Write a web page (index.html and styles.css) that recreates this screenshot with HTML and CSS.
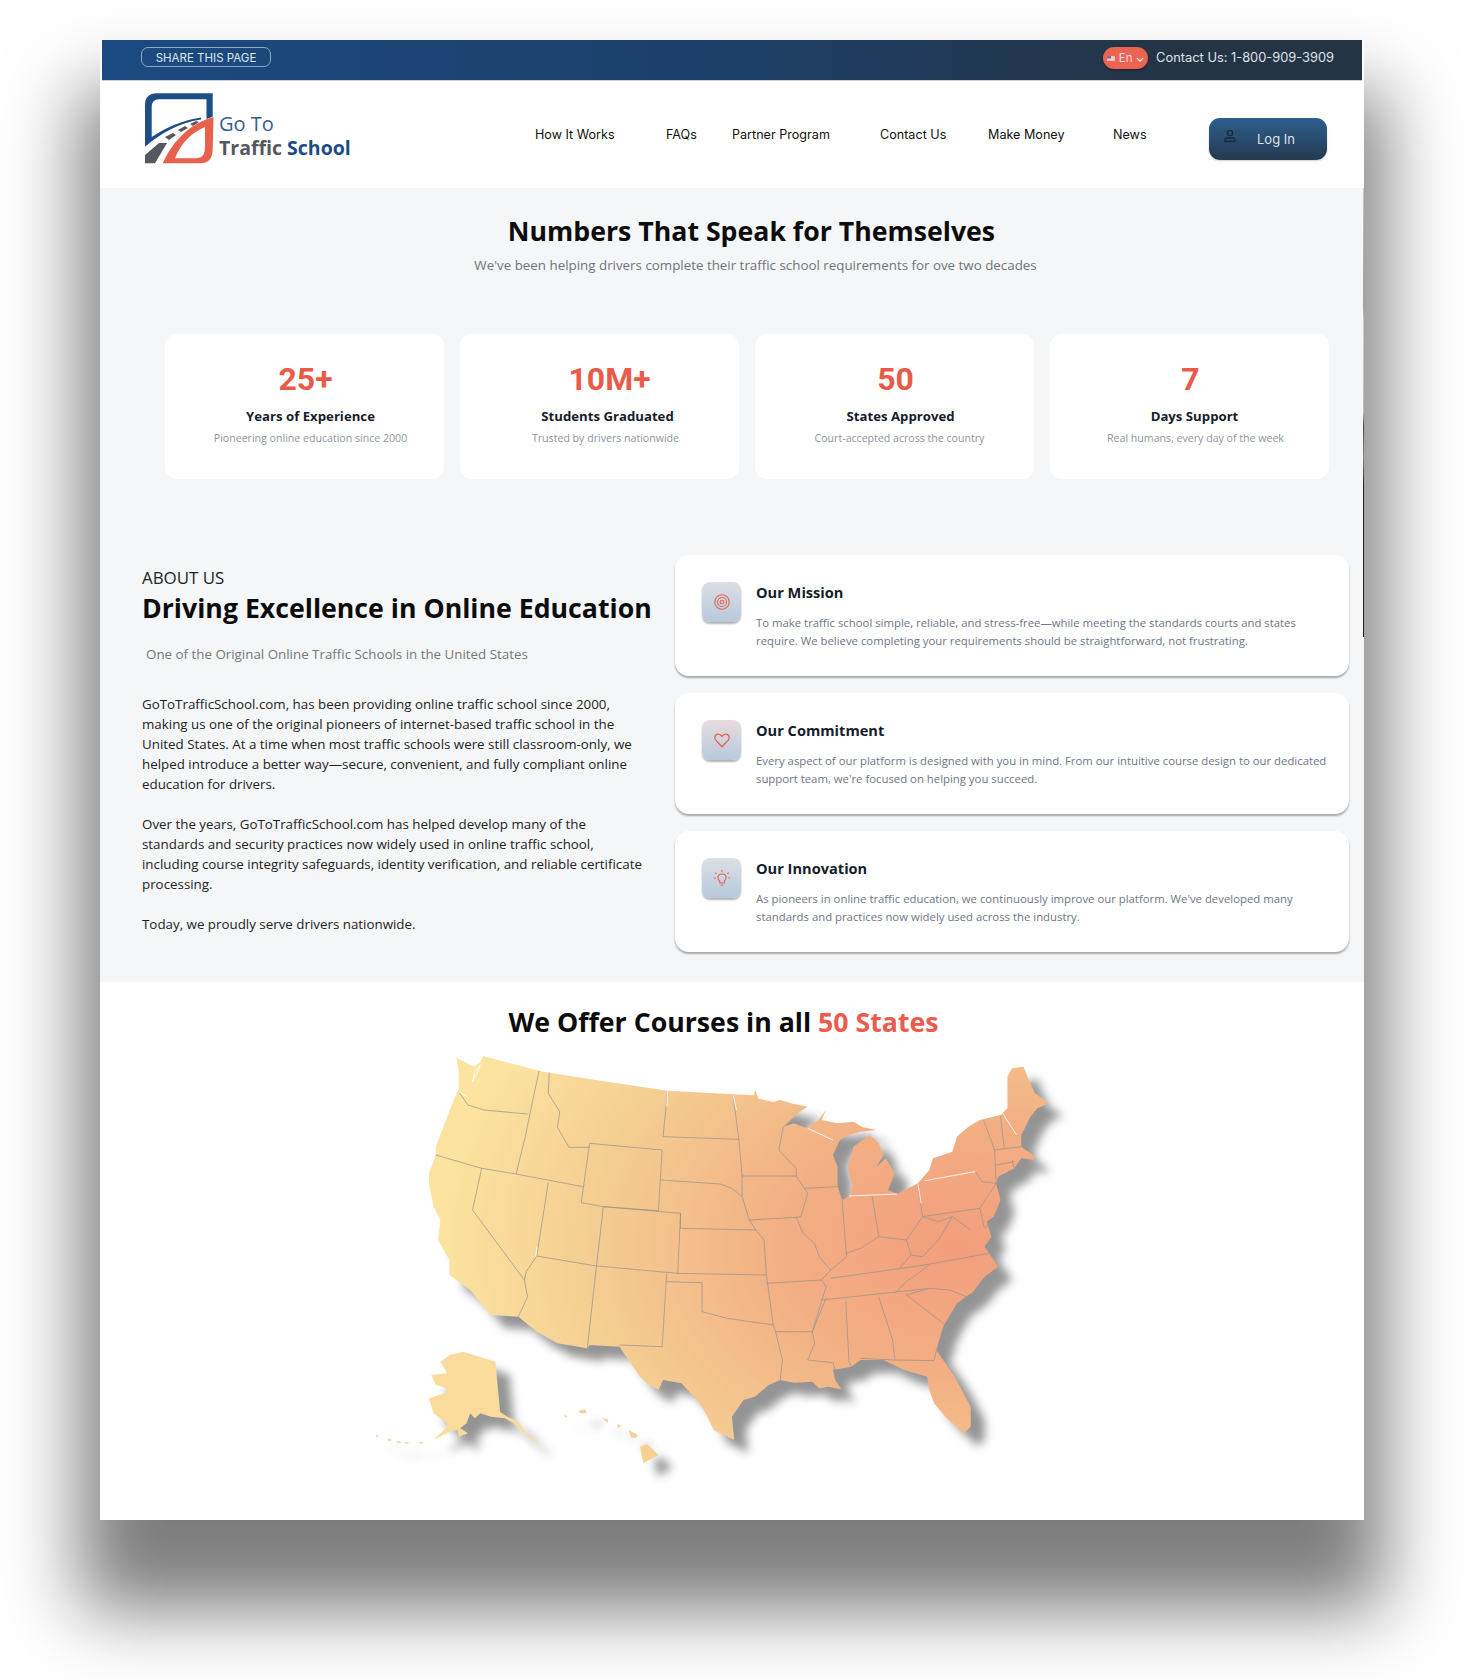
FILE: index.html
```html
<!DOCTYPE html>
<html lang="en">
<head>
  <meta charset="UTF-8">
  <title>Go To Traffic School</title>
  <link rel="stylesheet" href="styles.css">
</head>
<body>

  <div class="frame">

    <div class="topbar">
      <a class="share">SHARE THIS PAGE</a>
      <div class="topbar-right">
        <span class="lang">
          <svg class="flag" viewBox="0 0 10 6"><rect width="10" height="6" fill="#f3c6c0"/><rect width="5" height="3" fill="#5f6f9c"/></svg>
          En
          <svg class="chev" viewBox="0 0 10 6"><path d="M1 1l4 4 4-4" fill="none" stroke="#fff" stroke-width="1.5"/></svg>
        </span>
        <span class="contact">Contact Us: 1-800-909-3909</span>
      </div>
    </div>

    <header class="header">
      <div class="logo">
        <svg class="logo-mark" viewBox="0 0 72 76">
          <path fill="#1f4d86" d="M2 55.7V14Q2 2.3 14 2.3H69.7V25.7L63.5 28V8.3H16Q8.7 8.3 8.7 16V46C22 37 40 29 58 26.5L58 28.5C36 32 18 42 2 55.7Z"/>
          <path fill="#55595f" d="M2 72.3V64L16 52H24L12 72.3ZM22 46L30 42 33 44 26 49ZM35 39L42 35 45 37 38 41ZM47 33L53 30 56 31 50 35Z"/>
          <path fill="#e8614d" fill-rule="evenodd" d="M70.5 26C46 33 30 50 19.7 72.3H57Q69.7 72.3 69.7 58ZM62 36V56Q62 67.3 53 67.3H32C38 52 48 42 62 36Z"/>
        </svg>
        <div class="logo-text">
          <div class="logo-top">Go To</div>
          <div class="logo-bottom">Traffic <span>School</span></div>
        </div>
      </div>
      <nav class="nav">
        <a>How It Works</a>
        <a>FAQs</a>
        <a>Partner Program</a>
        <a>Contact Us</a>
        <a>Make Money</a>
        <a>News</a>
      </nav>
      <a class="login">
        <svg viewBox="0 0 14 14"><circle cx="7" cy="4" r="2.6" fill="none" stroke="#18293c" stroke-width="1.3"/><path d="M2 12.5V11q0-2 2-2h6q2 0 2 2v1.5z" fill="none" stroke="#18293c" stroke-width="1.3"/></svg>
        Log In
      </a>
    </header>

    <main class="gray">
      <h2 class="heading">Numbers That Speak for Themselves</h2>
      <p class="heading-sub">We've been helping drivers complete their traffic school requirements for ove two decades</p>

      <div class="stats">
        <div class="stat">
          <div class="stat-num nudge-2">25+</div>
          <div class="stat-label nudge-12">Years of Experience</div>
          <div class="stat-sub nudge-12">Pioneering online education since 2000</div>
        </div>
        <div class="stat">
          <div class="stat-num nudge-20">10M+</div>
          <div class="stat-label nudge-16">Students Graduated</div>
          <div class="stat-sub nudge-12">Trusted by drivers nationwide</div>
        </div>
        <div class="stat">
          <div class="stat-num nudge-2">50</div>
          <div class="stat-label nudge-12">States Approved</div>
          <div class="stat-sub nudge-10">Court-accepted across the country</div>
        </div>
        <div class="stat">
          <div class="stat-num nudge-2">7</div>
          <div class="stat-label nudge-10">Days Support</div>
          <div class="stat-sub nudge-12">Real humans, every day of the week</div>
        </div>
      </div>

      <section class="about">
        <div class="about-left">
          <div class="eyebrow">ABOUT US</div>
          <h2 class="about-title">Driving Excellence in Online Education</h2>
          <p class="about-sub">One of the Original Online Traffic Schools in the United States</p>
          <p class="about-text">GoToTrafficSchool.com, has been providing online traffic school since 2000, making us one of the original pioneers of internet-based traffic school in the United States. At a time when most traffic schools were still classroom-only, we helped introduce a better way—secure, convenient, and fully compliant online education for drivers.</p>
          <p class="about-text">Over the years, GoToTrafficSchool.com has helped develop many of the standards and security practices now widely used in online traffic school, including course integrity safeguards, identity verification, and reliable certificate processing.</p>
          <p class="about-text">Today, we proudly serve drivers nationwide.</p>
        </div>

        <div class="about-right">
          <div class="info">
            <div class="tile tile-blue">
              <svg viewBox="0 0 20 20" fill="none" stroke="#e8614d" stroke-width="1.2"><circle cx="10" cy="10" r="8"/><circle cx="10" cy="10" r="5"/><circle cx="10" cy="10" r="2"/></svg>
            </div>
            <div>
              <h3>Our Mission</h3>
              <p>To make traffic school simple, reliable, and stress-free—while meeting the standards courts and states require. We believe completing your requirements should be straightforward, not frustrating.</p>
            </div>
          </div>
          <div class="info">
            <div class="tile tile-pink">
              <svg viewBox="0 0 20 20" fill="none" stroke="#e8614d" stroke-width="1.4"><path d="M10 17.5L3 10.2C.8 7.5 2.4 3.5 5.8 3.5 7.6 3.5 9 4.5 10 6 11 4.5 12.4 3.5 14.2 3.5 17.6 3.5 19.2 7.5 17 10.2Z"/></svg>
            </div>
            <div>
              <h3>Our Commitment</h3>
              <p>Every aspect of our platform is designed with you in mind. From our intuitive course design to our dedicated support team, we're focused on helping you succeed.</p>
            </div>
          </div>
          <div class="info">
            <div class="tile tile-blue">
              <svg viewBox="0 0 20 20" fill="none" stroke="#e8614d" stroke-width="1.2"><path d="M7.5 13.5C6 12.3 5.5 11 5.5 9.8 5.5 7.3 7.5 5.5 10 5.5S14.5 7.3 14.5 9.8C14.5 11 14 12.3 12.5 13.5V15.5H7.5ZM8.5 18H11.5M10 1V3M2.5 4L4 5.5M17.5 4L16 5.5M1 10H3M17 10H19"/></svg>
            </div>
            <div>
              <h3>Our Innovation</h3>
              <p>As pioneers in online traffic education, we continuously improve our platform. We've developed many standards and practices now widely used across the industry.</p>
            </div>
          </div>
        </div>
      </section>
    </main>

    <section class="states">
      <h2 class="heading">We Offer Courses in all <span class="red">50 States</span></h2>
      <svg class="map" viewBox="0 0 1568 1380" preserveAspectRatio="none">
        <defs>
          <radialGradient id="mapFill" gradientUnits="userSpaceOnUse" cx="1300" cy="620" r="1130">
            <stop offset="0" stop-color="#f29d7c"/>
            <stop offset="0.35" stop-color="#f3b084"/>
            <stop offset="0.65" stop-color="#f4c98f"/>
            <stop offset="0.9" stop-color="#f9dc9b"/>
            <stop offset="1" stop-color="#fce4a0"/>
          </radialGradient>
        </defs>
        <!-- lower 48 -->
        <path class="land" d="M210 52L222 62 248 80 262 66 268 48 390 92 412 98 560 130 670 152 812 163 858 166 860 148 868 176 900 186 915 180 945 192 975 200 950 222 938 240 922 260 945 250 972 264 998 240 1015 210 1005 240 1040 250 1075 245 1095 262 1125 270 1090 275 1065 285 1045 300 1030 345 1040 380 1040 440 1050 480 1068 465 1072 440 1062 380 1075 320 1110 285 1130 310 1140 345 1125 380 1145 355 1165 400 1150 450 1170 462 1215 430 1240 390 1235 410 1248 355 1290 335 1300 290 1325 260 1350 240 1395 225 1410 205 1410 110 1420 85 1445 80 1455 115 1470 160 1500 190 1475 205 1460 230 1440 285 1440 320 1465 345 1470 360 1440 355 1425 385 1390 410 1385 430 1395 480 1380 530 1365 545 1375 590 1360 620 1345 590 1370 640 1390 680 1360 710 1335 755 1300 790 1270 860 1255 930 1295 1010 1330 1100 1330 1160 1315 1180 1275 1130 1250 1090 1240 1050 1235 1010 1185 990 1140 960 1090 960 1070 980 1030 990 1035 1020 1048 1048 1020 1040 1000 1045 985 1025 945 1028 915 1020 890 1035 860 1070 835 1080 810 1130 815 1200 770 1170 755 1125 740 1090 700 1030 660 1020 650 1050 625 1030 610 1010 565 920 500 915 495 925 430 910 385 875 345 830 285 825 240 750 195 705 195 660 170 600 175 540 160 500 150 430 150 400 165 345 165 320 190 230 210 160 215 150 215 95Z"/>
        <!-- alaska and hawaii -->
        <path class="land-ak" d="M175 965L195 945 225 935 295 965 300 1040 305 1115 318 1128 345 1145 360 1175 390 1210 375 1200 350 1170 335 1150 315 1135 285 1130 262 1120 250 1135 240 1120 232 1150 218 1165 235 1180 215 1190 213 1170 195 1175 160 1200 190 1160 190 1150 175 1135 160 1120 150 1075 185 1060 190 1045 165 1035 155 1005 190 1000Z"/>
        <path class="land-hi" d="M610 1220L625 1212 650 1245 617 1270ZM585 1170L605 1185 600 1195 590 1192ZM526 1135L540 1138 540 1148ZM476 1112L490 1108 494 1120 480 1120ZM560 1152L570 1158 562 1164ZM34 1182L42 1190 36 1192ZM60 1195L70 1200 62 1204ZM80 1203L92 1206 82 1210ZM98 1205L108 1208 100 1212ZM130 1205L140 1208 130 1212ZM445 1123L452 1130 446 1132Z"/>
        <!-- state lines -->
        <path class="lines" d="M215 155L235 195 270 210 365 222M390 92L370 222 360 290 340 402M165 345L265 385 340 402 485 440M412 98L410 160 435 215 430 262 455 322 500 322M500 310L658 330 650 512 530 500 482 488ZM410 428L385 648 515 678 530 500M265 385L245 510 358 720 362 695 385 648M358 720L365 770 345 830M515 678L495 925M515 678L692 700 885 705 880 600 862 570 698 565 698 520 530 500M668 700L658 920 565 915M698 520L692 700M670 152L660 290 825 298M812 163L825 298 832 405 832 470 848 540 862 570M655 420L785 432 810 445 832 470M668 725L745 728 745 815 800 835 900 855 885 705M905 875L920 960 915 1020M885 730L1005 720 1015 740 985 875 905 875 900 855M848 540L950 532 965 580 990 610 1000 650 1025 690 1005 720M832 408L950 408 975 460 960 530 950 532M922 260L912 330 950 385 950 408M968 445L1038 440M1050 480L1058 625 1060 650 1025 690M1058 640L1090 625 1130 590 1115 468M1215 432L1225 530 1190 600 1130 590M1190 600L1200 645 1175 685M1025 715L1230 675 1370 640M1200 645L1225 650 1260 600 1290 530 1260 545 1225 530 1350 505 1385 430 1355 425 1340 395M1290 530L1330 570M1350 505L1360 565 1375 545M1382 330L1385 425M1358 240L1382 330 1440 320M1395 228L1403 325M1385 375L1425 365M1420 360L1425 385M1005 780L1240 745M1165 760L1190 725 1240 675M1190 765L1240 745 1285 750 1320 770M1015 775L985 875 990 910 975 960 1030 968 1035 990M1058 785L1065 965 1070 980M1130 772L1160 900 1165 960M1090 955L1165 960 1250 962 1255 932M1190 765L1280 860"/>
        <path class="lines-light" d="M245 125L255 100 262 75 250 95 245 125M1065 468L1170 462M1230 422L1340 395M1395 210L1430 285M975 265L1030 300M812 163L820 210M670 152L668 200M215 155L235 172M1215 432L1222 490M385 620L383 650"/>
      </svg>
    </section>

  </div>

</body>
</html>
```

FILE: styles.css
```css
* { box-sizing: border-box; }
html, body { margin: 0; }
body { padding: 40px 100px 0; background: #fff; font-family: "Open Sans", sans-serif; color: #111; height: 1680px; overflow: hidden; }
h2, h3, p { margin: 0; }

.frame { width: 1264px; background: #fff; box-shadow: 0 70px 70px 20px rgba(0,0,0,.51); }

/* top bar */
.topbar { height: 41px; margin: 0 2px; padding: 7px 28px 0 39px; display: flex; justify-content: space-between; align-items: flex-start; background: linear-gradient(90deg, #1b4a82, #1d3f68 50%, #253445 85%); border-bottom: 1px solid #c5d0dc; font-family: Inter, sans-serif; }
.share { width: 130px; height: 20px; line-height: 21px; text-align: center; border: 1px solid #8ea8c6; border-radius: 7px; color: #dfe7f0; font-size: 11.5px; }
.topbar-right { display: flex; align-items: center; gap: 8px; }
.lang { width: 45px; height: 22px; border-radius: 11px; background: #ea6450; color: #fde; font-size: 11.5px; display: flex; align-items: center; justify-content: center; gap: 4px; box-shadow: 0 1px 2px rgba(0,0,0,.4); }
.flag { width: 8px; height: 5px; }
.chev { width: 8px; height: 5px; margin-top: 2px; }
.contact { color: #dfe3e8; font-size: 12.85px; margin-top: -2px; }

/* header */
.header { height: 107px; display: flex; align-items: flex-start; padding-left: 43px; background: #fff; }
.logo { display: flex; margin-top: 10px; width: 392px; }
.logo-mark { width: 72px; height: 76px; }
.logo-text { margin: 21px 0 0 4px; }
.logo-top { font-size: 20px; line-height: 24px; color: #2f5d92; }
.logo-bottom { font-size: 19.5px; line-height: 24px; font-weight: 700; color: #55595f; }
.logo-bottom span { color: #1d4b85; }
.nav { display: grid; grid-template-columns: 131px 66px 148px 108px 125px 96px; margin-top: 44px; font-family: Inter, sans-serif; font-size: 12.6px; line-height: 19px; color: #111; }
.login { width: 118px; height: 42px; margin-top: 37px; display: flex; align-items: center; gap: 20px; padding-left: 14px; border-radius: 11px; background: linear-gradient(180deg, #2f5f8f, #24394f); color: #d8e2ee; font-family: Inter, sans-serif; font-size: 13px; box-shadow: 0 1px 2px rgba(0,0,0,.2); }
.login svg { width: 14px; height: 14px; margin-top: -6px; }

/* gray part */
.gray { position: relative; background: #f5f6f8; padding: 25px 15px 30px 42px; height: 794px; }
.gray::after { content: ""; position: absolute; top: 0; right: 0; width: 1px; height: 449px; background: linear-gradient(180deg, #cfc9ba, #9aa58a 26%, #cfcfcf 30%, #bdbdbd 50%, #444 53%, #8a8a8a 60%, #222 66%, #222); }
.heading { font-size: 26.7px; line-height: 36px; font-weight: 700; text-align: center; color: #0c0c0c; }
.gray > .heading { padding-left: 12px; }
.red { color: #ec5b4b; }
.heading-sub { margin-top: 6px; font-size: 13.35px; line-height: 20px; color: #6f7378; text-align: center; padding-left: 20px; }

.stats { display: grid; grid-template-columns: repeat(4, 279px); gap: 16px; margin: 59px 0 0 23px; }
.stat { height: 145px; background: #fff; border-radius: 12px; padding-top: 25px; text-align: center; }
.stat-num { font-family: Roboto, sans-serif; font-weight: 700; font-size: 32px; line-height: 40px; color: #e95b49; }
.stat-label { margin-top: 7px; font-size: 13.2px; line-height: 20px; font-weight: 700; color: #161c2b; }
.stat-sub { margin-top: 4px; font-size: 10.6px; line-height: 16px; color: #90959e; }
.nudge-2 { padding-left: 2px; }
.nudge-10 { padding-left: 10px; }
.nudge-12 { padding-left: 12px; }
.nudge-16 { padding-left: 16px; }
.nudge-20 { padding-left: 20px; }

.about { display: grid; grid-template-columns: 510px 674px; gap: 23px; margin-top: 76px; }
.about-left { padding-top: 11px; }
.eyebrow { font-size: 16.9px; line-height: 24px; color: #222; }
.about-title { font-size: 26.7px; line-height: 36px; font-weight: 700; color: #0c0c0c; white-space: nowrap; }
.about-sub { margin-top: 18px; padding-left: 4px; font-size: 13.35px; line-height: 20px; color: #777; }
.about-text { margin-top: 20px; max-width: 505px; font-size: 13.35px; line-height: 20px; color: #222; }
.about-sub + .about-text { margin-top: 30px; }

.about-right { display: flex; flex-direction: column; gap: 17px; }
.info { height: 121px; display: flex; gap: 15px; padding: 27px 20px 0 27px; background: #fff; border-radius: 14px; box-shadow: 0 2px 2px rgba(0,0,0,.32); }
.tile { flex: none; width: 39px; height: 40px; display: flex; align-items: center; justify-content: center; border-radius: 8px; box-shadow: 0 2px 2px rgba(0,0,0,.3); }
.tile svg { width: 18px; height: 18px; }
.tile-blue { background: linear-gradient(180deg, #dcdfe4, #b7c9dc); }
.tile-pink { background: linear-gradient(180deg, #e9dcdf, #b7c9dc); }
.info h3 { font-size: 14.6px; line-height: 20px; font-weight: 700; color: #161c2b; }
.info p { margin-top: 12px; font-size: 11.35px; line-height: 18px; color: #6e7687; }

/* map */
.states { height: 538px; padding-top: 22px; background: #fff; }
.states .heading { margin-right: 17px; }
.map { display: block; width: 720px; height: 460px; margin-left: 260px; filter: drop-shadow(14px 13px 5px rgba(0,0,0,.42)); }
.land { fill: url(#mapFill); }
.land-ak { fill: #f9dc9c; }
.land-hi { fill: #f6d196; }
.lines { fill: none; stroke: rgba(150,148,142,.8); stroke-width: .9; vector-effect: non-scaling-stroke; stroke-linejoin: round; }
.lines-light { fill: none; stroke: rgba(255,255,255,.85); stroke-width: 1; vector-effect: non-scaling-stroke; }
```
